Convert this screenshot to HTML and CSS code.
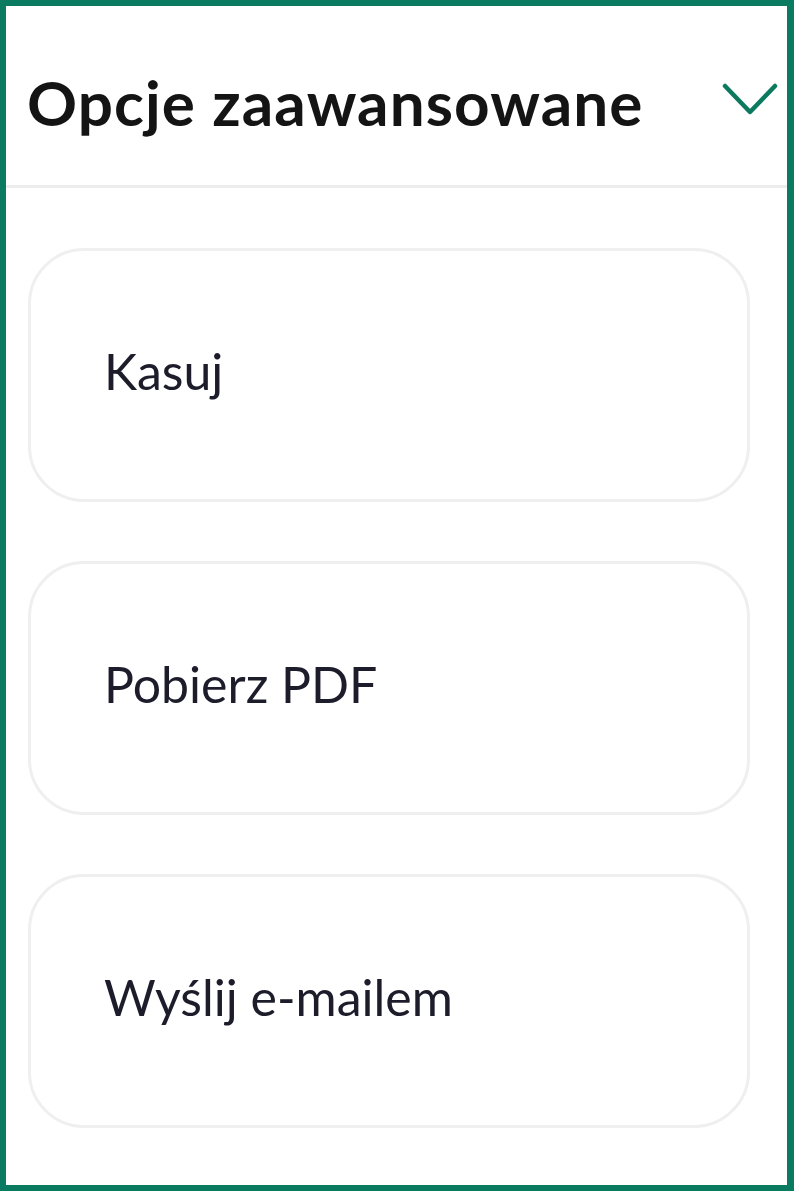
FILE: index.html
```html
<!DOCTYPE html>
<html lang="pl">
<head>
<meta charset="utf-8">
<link rel="stylesheet" href="styles.css">
</head>
<body>
<div class="frame">
  <div class="header">
    <h1 class="title">Opcje zaawansowane</h1>
    <svg class="chevron" viewBox="0 0 56 34" width="56" height="34"><path d="M3 3 L28 29 L53 3" fill="none" stroke="#0b7a5f" stroke-width="4.5" stroke-linecap="round" stroke-linejoin="round"/></svg>
  </div>
  <div class="list">
    <div class="card">Kasuj</div>
    <div class="card">Pobierz PDF</div>
    <div class="card">Wyślij e-mailem</div>
  </div>
</div>
</body>
</html>
```
FILE: styles.css
```css
html, body {
  margin: 0;
  padding: 0;
  background: #ffffff;
}
.frame {
  box-sizing: border-box;
  width: 794px;
  height: 1191px;
  border: 6px solid #0a7b60;
  border-right-width: 7px;
  background: #ffffff;
  font-family: Lato, "Open Sans", sans-serif;
}
.header {
  height: 182px;
  box-sizing: border-box;
  border-bottom: 3px solid #ededed;
  display: flex;
  align-items: center;
  justify-content: space-between;
  padding: 12px 9px 0 21px;
}
.title {
  margin: 0;
  font-size: 62px;
  font-weight: 700;
  color: #141414;
  letter-spacing: 1.1px;
}
.chevron {
  display: block;
  margin-top: -4px;
}
.list {
  display: flex;
  flex-direction: column;
  gap: 59px;
  padding: 60px 37px 0 22px;
}
.card {
  box-sizing: border-box;
  height: 254px;
  border: 3px solid #efefef;
  border-radius: 56px;
  display: flex;
  align-items: center;
  padding-left: 73px;
  padding-bottom: 8px;
  font-size: 50px;
  color: #1c1c2a;
}
```
